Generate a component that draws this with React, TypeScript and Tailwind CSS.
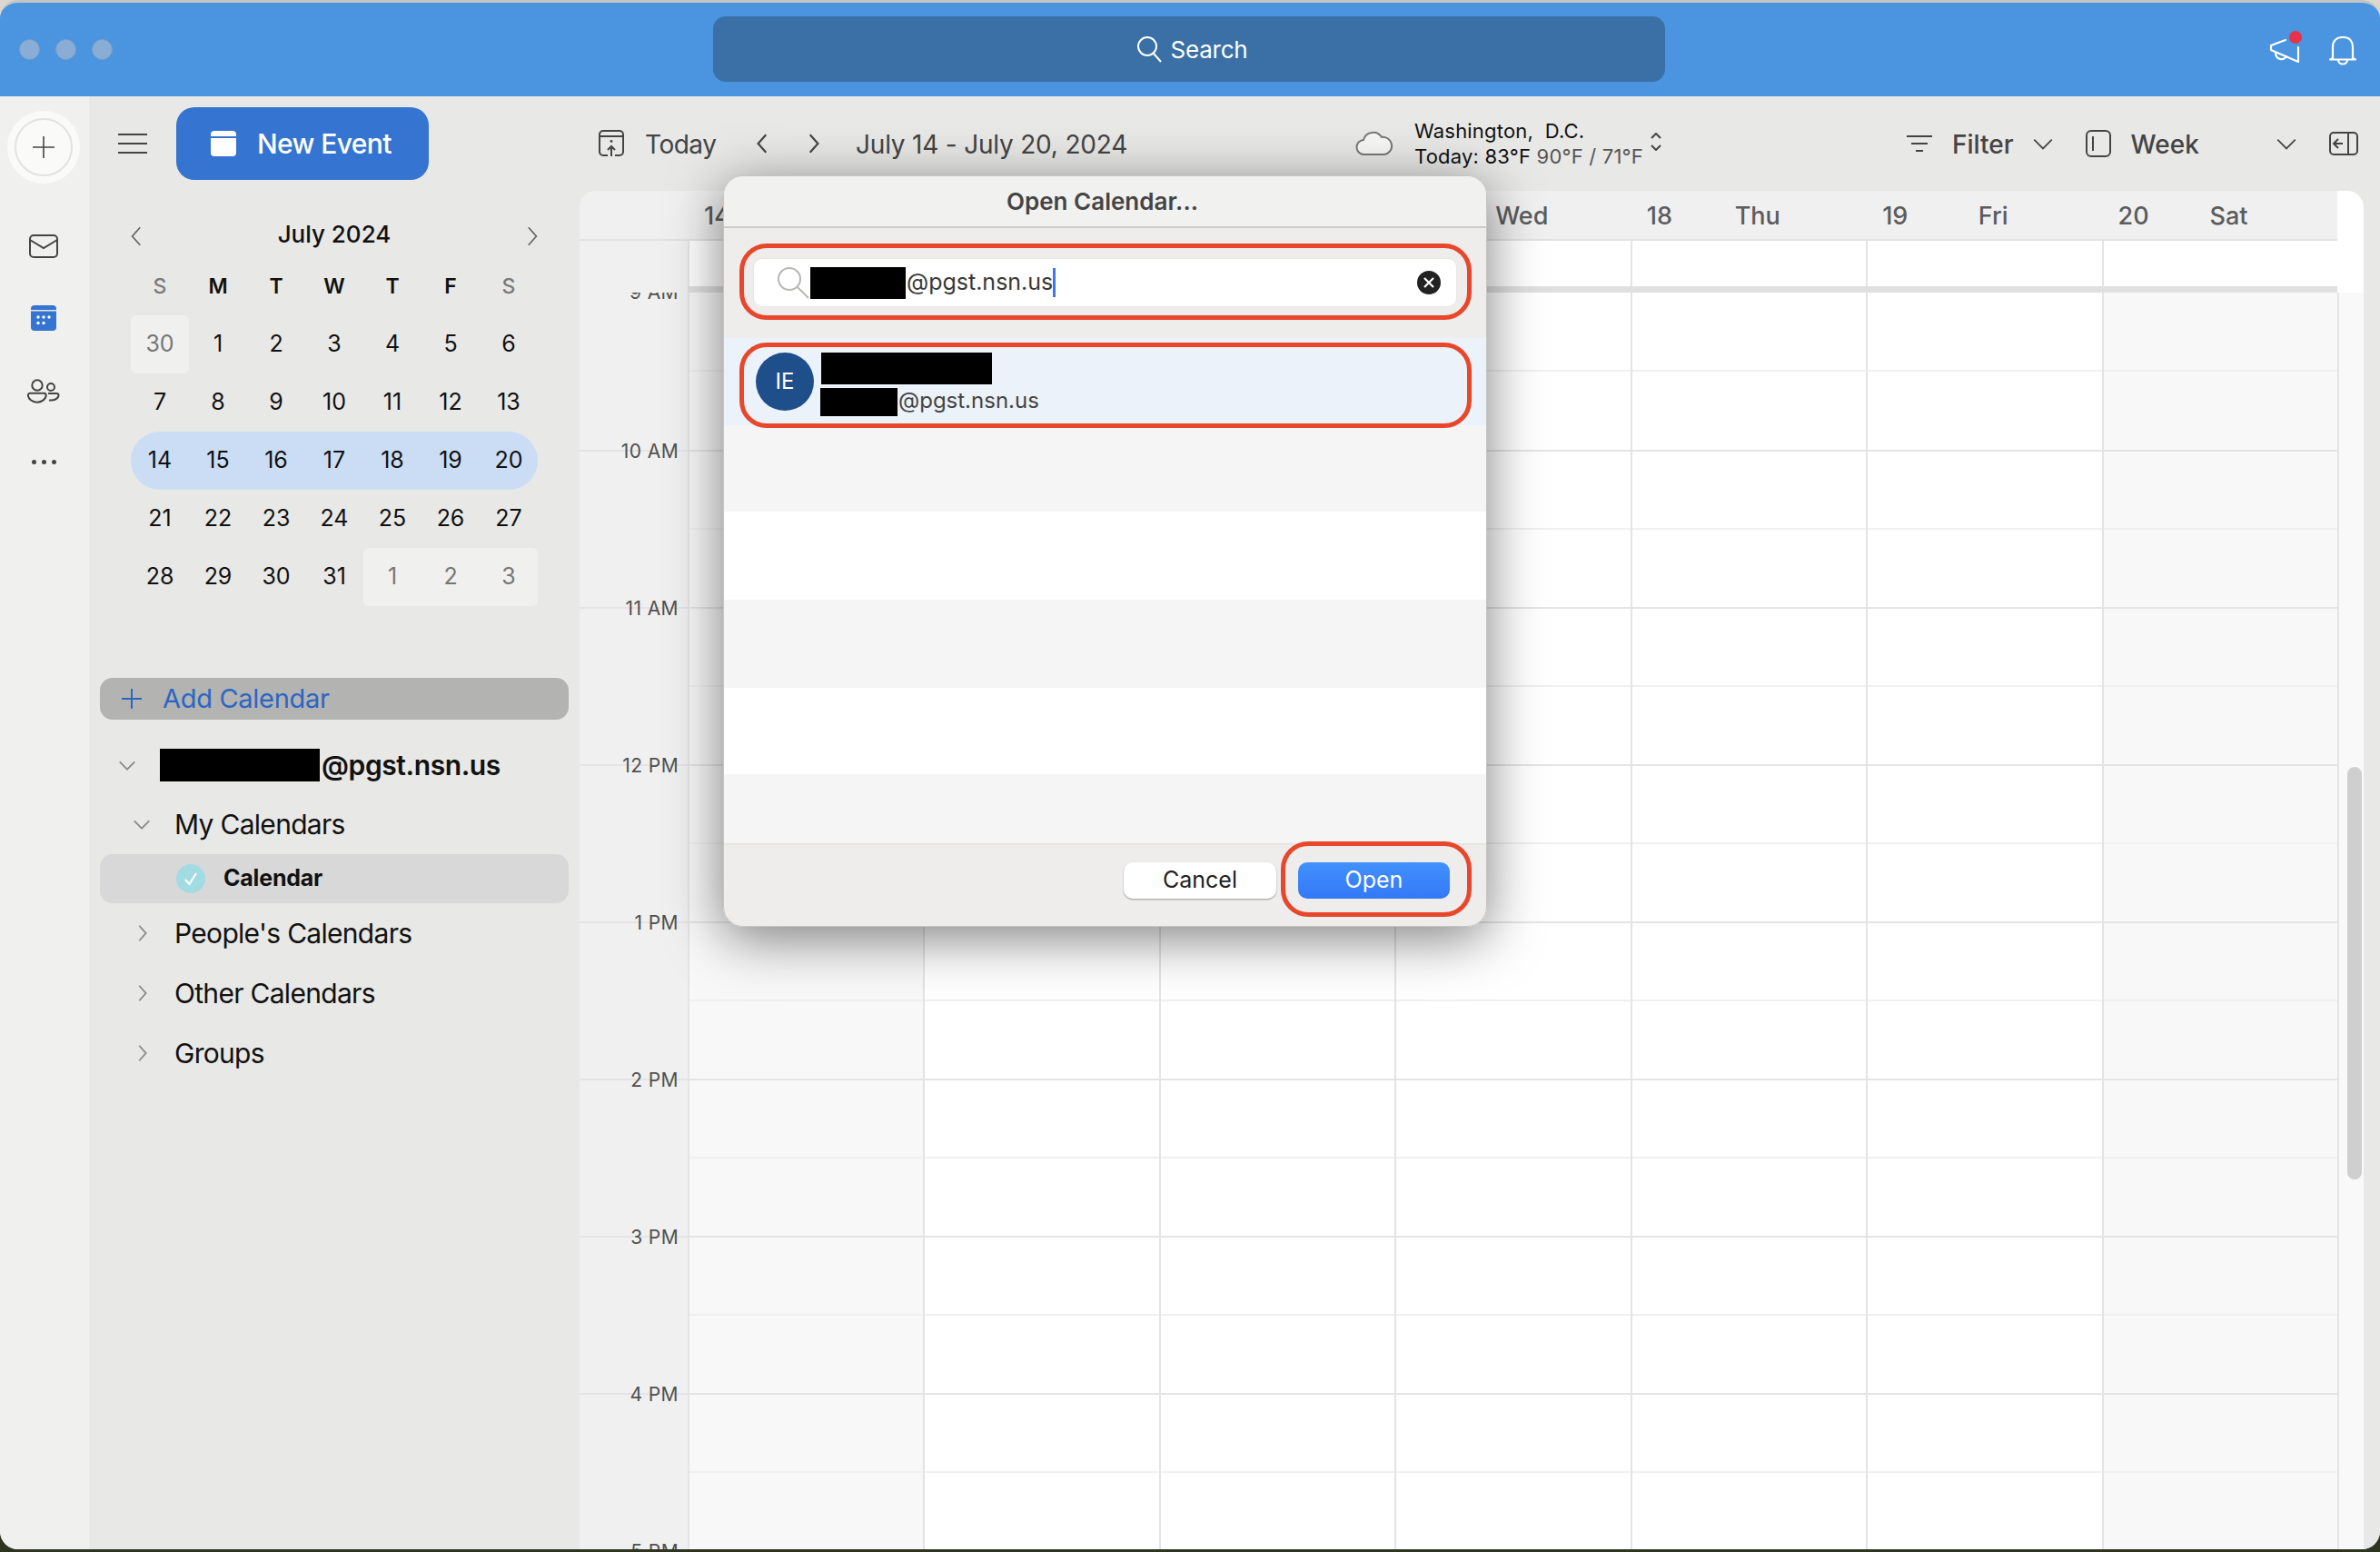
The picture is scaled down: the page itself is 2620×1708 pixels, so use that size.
import React from "react";

const days = [
  { n: 14, d: "Sun" },
  { n: 15, d: "Mon" },
  { n: 16, d: "Tue" },
  { n: 17, d: "Wed" },
  { n: 18, d: "Thu" },
  { n: 19, d: "Fri" },
  { n: 20, d: "Sat" },
];

const hours = ["9 AM", "10 AM", "11 AM", "12 PM", "1 PM", "2 PM", "3 PM", "4 PM", "5 PM"];

const monthRows = [
  [30, 1, 2, 3, 4, 5, 6],
  [7, 8, 9, 10, 11, 12, 13],
  [14, 15, 16, 17, 18, 19, 20],
  [21, 22, 23, 24, 25, 26, 27],
  [28, 29, 30, 31, 1, 2, 3],
];

function Chevron({ dir, size = 22, color = "#555", sw = 2 }: { dir: "left" | "right" | "up" | "down"; size?: number; color?: string; sw?: number }) {
  const d = {
    left: "M15 3 L7 12 L15 21",
    right: "M9 3 L17 12 L9 21",
    down: "M3 8 L12 17 L21 8",
    up: "M3 16 L12 7 L21 16",
  }[dir];
  return (
    <svg width={size} height={size} viewBox="0 0 24 24" fill="none" stroke={color} strokeWidth={sw} className="shrink-0">
      <path d={d} />
    </svg>
  );
}

function Redacted({ className }: { className: string }) {
  return <div className={`bg-black shrink-0 ${className}`} />;
}

function TreeRow({ label, open }: { label: string; open?: boolean }) {
  return (
    <div className="h-[66px] mx-[12px] flex items-center">
      <div className="w-[82px] pl-[35px]">
        <Chevron dir={open ? "down" : "right"} color="#8a8a8e" />
      </div>
      <span className="text-[30px] tracking-[-0.7px] text-[#111]">{label}</span>
    </div>
  );
}

function Rail() {
  return (
    <div className="w-[98px] shrink-0 bg-[#f0f0ee] flex flex-col items-center pr-[2px]">
      <div className="mt-[16px] w-[80px] h-[80px] rounded-full bg-[#fafaf8] flex items-center justify-center">
        <div className="w-[64px] h-[64px] rounded-full border-2 border-[#e2e2e0] flex items-center justify-center">
          <svg width="26" height="26" viewBox="0 0 26 26" stroke="#444" strokeWidth="1.6">
            <path d="M13 1V25M1 13H25" />
          </svg>
        </div>
      </div>
      <svg className="mt-[55px]" width="34" height="28" viewBox="0 0 34 28" fill="none" stroke="#444" strokeWidth="2">
        <rect x="2" y="2" width="30" height="24" rx="4" />
        <path d="M2 7L17 16L32 7" />
      </svg>
      <svg className="mt-[51px]" width="28" height="28" viewBox="0 0 28 28">
        <rect width="28" height="28" rx="4" fill="#3574d0" />
        <rect y="5" width="28" height="1.5" fill="#e8e8e6" />
        <g fill="#fff">
          <circle cx="8" cy="13" r="1.7" />
          <circle cx="14" cy="13" r="1.7" />
          <circle cx="20" cy="13" r="1.7" />
          <circle cx="8" cy="19.5" r="1.7" />
          <circle cx="14" cy="19.5" r="1.7" />
        </g>
      </svg>
      <svg className="mt-[50px]" width="36" height="30" viewBox="0 0 36 30" fill="none" stroke="#444" strokeWidth="2">
        <circle cx="11" cy="10" r="5.7" />
        <circle cx="26" cy="12" r="4" />
        <path d="M3 18.7H18.5a2.3 2.3 0 0 1 2.2 2.2C20.7 25 16 28.7 10.7 28.7S.9 25 .9 20.9A2.3 2.3 0 0 1 3 18.7z" />
        <path d="M23 19H32.5a2 2 0 0 1 2 2C34.5 24.5 30 27 24 26.5" />
      </svg>
      <div className="mt-[62px] flex gap-[6px]">
        <div className="w-[5px] h-[5px] rounded-full bg-[#444]" />
        <div className="w-[5px] h-[5px] rounded-full bg-[#444]" />
        <div className="w-[5px] h-[5px] rounded-full bg-[#444]" />
      </div>
    </div>
  );
}

function MiniMonth() {
  return (
    <div className="ml-[46px] w-[448px]">
      <div className="mt-[37px] h-[44px] -mx-[6px] flex items-center justify-between">
        <div className="mt-[5px]">
          <Chevron dir="left" size={26} color="#666" sw={1.6} />
        </div>
        <span className="text-[26px] font-medium text-[#111]">July 2024</span>
        <div className="mt-[5px]">
          <Chevron dir="right" size={26} color="#666" sw={1.6} />
        </div>
      </div>
      <div className="mt-[5px] h-[63px] grid grid-cols-7 items-center text-center text-[23px] font-semibold text-[#111]">
        {["S", "M", "T", "W", "T", "F", "S"].map((d, i) => (
          <span key={i} className={i === 0 || i === 6 ? "text-[#7a7a7a] font-medium" : ""}>
            {d}
          </span>
        ))}
      </div>
      {monthRows.map((row, r) => (
        <div key={r} className={`h-[64px] grid grid-cols-7 text-[25px] text-[#111] ${r === 2 ? "bg-[#cbddf4] rounded-full" : ""}`}>
          {row.map((n, c) => {
            const prev = r === 0 && c === 0;
            const next = r === 4 && c >= 4;
            return (
              <div
                key={c}
                className={`flex items-center justify-center ${prev ? "bg-[#f0f0ee] text-[#777] rounded-[6px]" : ""} ${next ? "bg-[#f0f0ee] text-[#777]" : ""} ${r === 4 && c === 4 ? "rounded-l-[6px]" : ""} ${r === 4 && c === 6 ? "rounded-r-[6px]" : ""}`}
              >
                {n}
              </div>
            );
          })}
        </div>
      ))}
    </div>
  );
}

function Sidebar() {
  return (
    <div className="w-[540px] shrink-0 bg-[#e8e8e6] flex flex-col">
      <div className="mt-[12px] h-[80px] flex items-center pl-[32px] gap-[32px]">
        <svg width="32" height="24" viewBox="0 0 32 24" stroke="#444" strokeWidth="2">
          <path d="M0 2H32M0 12H32M0 22H32" />
        </svg>
        <div className="w-[278px] h-[80px] bg-[#3574d0] rounded-[20px] flex items-center pl-[38px] gap-[23px]">
          <svg width="28" height="28" viewBox="0 0 28 28">
            <path d="M4 0H24a4 4 0 0 1 4 4V6H0V4a4 4 0 0 1 4-4z" fill="#fff" />
            <path d="M0 8H28V24a4 4 0 0 1-4 4H4a4 4 0 0 1-4-4z" fill="#fff" />
          </svg>
          <span className="text-[30px] font-medium tracking-[-0.6px] text-white">New Event</span>
        </div>
      </div>
      <MiniMonth />
      <div className="mt-[79px] mx-[12px] h-[46px] rounded-[14px] bg-[#b3b3b1] flex items-center pl-[24px] gap-[23px]">
        <svg width="22" height="22" viewBox="0 0 22 22" stroke="#2a66c5" strokeWidth="2">
          <path d="M11 0V22M0 11H22" />
        </svg>
        <span className="text-[29px] tracking-[-0.3px] text-[#2a66c5]">Add Calendar</span>
      </div>
      <div className="mt-[18px] mx-[12px] h-[64px] flex items-center">
        <div className="w-[66px] pl-[19px]">
          <Chevron dir="down" color="#8a8a8e" />
        </div>
        <Redacted className="w-[176px] h-[36px]" />
        <span className="ml-[2px] text-[30px] font-semibold tracking-[-0.4px] text-[#111]">@pgst.nsn.us</span>
      </div>
      <TreeRow label="My Calendars" open />
      <div className="mx-[12px] h-[54px] rounded-[14px] bg-[#d8d8d8] flex items-center pl-[84px]">
        <div className="w-[32px] h-[32px] rounded-full bg-[#a3dbe2] flex items-center justify-center">
          <svg width="18" height="18" viewBox="0 0 18 18" fill="none" stroke="#fff" strokeWidth="2">
            <path d="M3 10L7.5 15L15 3" />
          </svg>
        </div>
        <span className="ml-[20px] text-[25px] font-bold tracking-[-0.2px] text-[#111]">Calendar</span>
      </div>
      <TreeRow label="People's Calendars" />
      <TreeRow label="Other Calendars" />
      <TreeRow label="Groups" />
    </div>
  );
}

function Toolbar() {
  return (
    <div className="h-[104px] flex items-center text-[#444] bg-[#e8e8e6]">
      <svg className="ml-[21px]" width="28" height="30" viewBox="0 0 28 30" fill="none" stroke="#444" strokeWidth="2">
        <path d="M10 28H5a4 4 0 0 1-4-4V5a4 4 0 0 1 4-4h18a4 4 0 0 1 4 4v19a4 4 0 0 1-4 4h-5" />
        <path d="M1 7H27M14 29V18M10 22L14 18L18 22" />
        <circle cx="14" cy="12.5" r="1.4" fill="#444" stroke="none" />
      </svg>
      <span className="ml-[23px] mt-[2px] w-[77px] text-[28px] tracking-[-0.5px] whitespace-nowrap">Today</span>
      <div className="ml-[40px]">
        <Chevron dir="left" size={26} color="#444" />
      </div>
      <div className="ml-[29px]">
        <Chevron dir="right" size={26} color="#444" />
      </div>
      <span className="ml-[34px] mt-[2px] w-[301px] text-[28px] tracking-[-0.2px] whitespace-nowrap">July 14 - July 20, 2024</span>
      <svg className="ml-[249px]" width="42" height="28" viewBox="0 0 42 28" fill="#f7f7f5" stroke="#777" strokeWidth="2">
        <path d="M10 26a8 8 0 0 1-1-16 11 11 0 0 1 20-3 9 9 0 0 1 3 19z" />
      </svg>
      <div className="ml-[23px] w-[259px] flex flex-col leading-[28px] text-[22px] tracking-[0.2px] text-[#111] whitespace-nowrap">
        <span>Washington,&nbsp; D.C.</span>
        <span>
          Today: 83°F <span className="text-[#555]">90°F / 71°F</span>
        </span>
      </div>
      <svg className="mb-[4px]" width="14" height="20" viewBox="0 0 14 20" fill="none" stroke="#444" strokeWidth="2">
        <path d="M2 6L7 1L12 6M2 14L7 19L12 14" />
      </svg>
      <svg className="ml-[269px]" width="28" height="20" viewBox="0 0 28 20" stroke="#444" strokeWidth="2">
        <path d="M0 2H28M5 10H23M10 18H18" />
      </svg>
      <span className="ml-[22px] mt-[2px] text-[28px] font-medium">Filter</span>
      <div className="ml-[19px]">
        <Chevron dir="down" size={26} color="#444" sw={1.6} />
      </div>
      <svg className="ml-[34px]" width="28" height="30" viewBox="0 0 28 30" fill="none" stroke="#444" strokeWidth="2">
        <rect x="1" y="1" width="26" height="28" rx="5" />
        <path d="M8 7V23" />
      </svg>
      <span className="ml-[22px] mt-[2px] text-[28px] font-medium">Week</span>
      <div className="ml-[83px]">
        <Chevron dir="down" size={26} color="#444" sw={1.6} />
      </div>
      <svg className="ml-[34px]" width="32" height="26" viewBox="0 0 32 26" fill="none" stroke="#444" strokeWidth="2">
        <rect x="1" y="1" width="30" height="24" rx="4" />
        <path d="M21 1V25M15 13H6M10 8L5 13L10 18" />
      </svg>
    </div>
  );
}

function CalendarGrid() {
  return (
    <div className="flex-1 flex min-h-0 rounded-tl-[18px] overflow-hidden">
      <div className="w-[1935px] shrink-0 flex flex-col bg-[#f0f0f0] overflow-hidden">
        <div className="h-[55px] flex shrink-0 border-b-2 border-[#e2e2e2]">
          <div className="w-[119px] shrink-0" />
          <div className="flex-1 grid grid-cols-7">
            {days.map((d) => (
              <div key={d.n} className="flex items-center pt-[3px] text-[27px] font-medium text-[#5c5c5c]">
                <span className="w-[60px] pl-[18px]">{d.n}</span>
                <span className="w-[160px] text-center">{d.d}</span>
              </div>
            ))}
          </div>
        </div>
        <div className="h-[50px] flex shrink-0">
          <div className="w-[119px] shrink-0" />
          <div className="flex-1 grid grid-cols-7">
            {days.map((d) => (
              <div key={d.n} className="bg-white border-l-2 border-[#e4e4e4]" />
            ))}
          </div>
        </div>
        <div className="h-[7px] shrink-0 bg-[#e0e0e0] ml-[119px]" />
        <div className="flex-1 overflow-hidden">
          {hours.map((h, i) => (
            <div key={h} className={`h-[173px] flex ${i === 0 ? "" : "border-t-2 border-[#e4e4e4]"}`}>
              <div className="w-[119px] shrink-0 pr-[10px] text-right text-[21px] leading-[24px] text-[#505050] bg-[#f0f0f0] tracking-[0.4px]">
                <span className="block -translate-y-1/2">{h}</span>
              </div>
              <div className="flex-1 grid grid-cols-7">
                {days.map((d, c) => (
                  <div key={d.n} className={`border-l-2 border-[#e4e4e4] ${c === 0 || c === 6 ? "bg-[#f8f8f8]" : "bg-white"}`}>
                    <div className="h-[50%] border-b-2 border-[#f0f0f0]" />
                  </div>
                ))}
              </div>
            </div>
          ))}
        </div>
      </div>
      <div className="w-[29px] shrink-0 flex flex-col rounded-tr-[18px] overflow-hidden bg-white">
        <div className="h-[112px] shrink-0" />
        <div className="flex-1 bg-[#f9f9f9] pl-[9px] pr-[2px] pt-[522px] border-l-2 border-[#e4e4e4]">
          <div className="h-[454px] rounded-full bg-[#cfcfcf]" />
        </div>
      </div>
      <div className="w-[18px] shrink-0 bg-[#e8e8e6]" />
    </div>
  );
}

function OpenCalendarDialog() {
  return (
    <div className="absolute left-[796px] top-[193px] w-[841px] h-[827px] rounded-[22px] overflow-hidden flex flex-col bg-[#eeedeb] border border-[#c4c4c4]">
      <div className="h-[55px] shrink-0 bg-[#f1f1ef] flex items-center justify-center pr-[6px] border-b-2 border-[#cdcdcb] box-content">
        <span className="text-[26px] font-semibold text-[#444]">Open Calendar...</span>
      </div>
      <div className="h-[121px] shrink-0 px-[32px] pt-[33px]">
        <div className="h-[54px] bg-white rounded-[10px] border border-[#e6e6e4] flex items-center pl-[25px] pr-[17px]">
          <svg width="36" height="36" viewBox="0 0 36 36" fill="none" stroke="#b8b6b2" strokeWidth="2" className="shrink-0">
            <circle cx="14" cy="14" r="12" />
            <path d="M23 23L35 35" />
          </svg>
          <Redacted className="ml-[1px] w-[105px] h-[35px]" />
          <span className="text-[25px] text-[#3a3a3a] ml-[1px]">@pgst.nsn.us</span>
          <div className="w-[3px] h-[32px] bg-[#3a78f0]" />
          <div className="ml-auto w-[26px] h-[26px] rounded-full bg-[#222] flex items-center justify-center">
            <svg width="12" height="12" viewBox="0 0 12 12" stroke="#fff" strokeWidth="2.2">
              <path d="M1 1L11 11M11 1L1 11" />
            </svg>
          </div>
        </div>
      </div>
      <div className="h-[96px] shrink-0 bg-[#ebf2fa] flex items-center pl-[35px]">
        <div className="w-[64px] h-[64px] rounded-full bg-[#1f4f8b] flex items-center justify-center text-[24px] text-white">IE</div>
        <div className="ml-[7px] flex flex-col mt-[6px]">
          <Redacted className="ml-[1px] w-[188px] h-[35px]" />
          <div className="mt-[4px] flex items-start">
            <Redacted className="w-[85px] h-[31px]" />
            <span className="ml-[1px] text-[24px] leading-[28px] text-[#444]">@pgst.nsn.us</span>
          </div>
        </div>
      </div>
      <div className="h-[95px] shrink-0 bg-[#f4f5f4]" />
      <div className="h-[97px] shrink-0 bg-white" />
      <div className="h-[97px] shrink-0 bg-[#f4f5f4]" />
      <div className="h-[95px] shrink-0 bg-white" />
      <div className="h-[78px] shrink-0 bg-[#f4f5f4] border-b-2 border-[#e5e5e3]" />
      <div className="flex-1 flex items-start justify-end pt-[19px] pr-[40px] gap-[24px] text-[25px]">
        <button className="w-[168px] h-[40px] rounded-[10px] bg-white text-[#222] shadow-[0_1px_2px_rgba(0,0,0,0.35)]">Cancel</button>
        <button className="w-[167px] h-[40px] rounded-[10px] bg-gradient-to-b from-[#4291ff] to-[#3478f6] text-white">Open</button>
      </div>
      {/* annotation outlines */}
      <div className="absolute left-[17px] top-[74px] w-[806px] h-[84px] rounded-[30px] border-[5px] border-[#e8472b]" />
      <div className="absolute left-[17px] top-[183px] w-[806px] h-[94px] rounded-[30px] border-[5px] border-[#e8472b]" />
      <div className="absolute left-[613px] top-[732px] w-[210px] h-[83px] rounded-[30px] border-[5px] border-[#e8472b]" />
    </div>
  );
}

export default function App() {
  return (
    <div className="relative w-[2620px] h-[1708px] overflow-hidden bg-[linear-gradient(#dcd8d0_50%,#2f3420_50%)] [font-family:Inter,'Noto_Sans',sans-serif]">
      <div className="w-[2620px] h-[1705px] rounded-[20px] overflow-hidden flex flex-col bg-[#e8e8e6] border-t-[3px] border-[#c6c4c0]">
        <div className="h-[103px] shrink-0 bg-[#4a94e0] flex items-center">
          <div className="w-[785px] flex items-center gap-[17px] pl-[21px] pb-[1px]">
            <div className="w-[23px] h-[23px] rounded-full bg-[#8aadd6] border border-[#7c9cc4]" />
            <div className="w-[23px] h-[23px] rounded-full bg-[#8aadd6] border border-[#7c9cc4]" />
            <div className="w-[23px] h-[23px] rounded-full bg-[#8aadd6] border border-[#7c9cc4]" />
          </div>
          <div className="w-[1048px] h-[72px] mb-[1px] rounded-[14px] bg-[#3a70a6] flex items-center justify-center pl-[6px] gap-[8px] text-white text-[26px] tracking-[-0.2px]">
            <svg width="30" height="30" viewBox="0 0 30 30" fill="none" stroke="#fff" strokeWidth="2">
              <circle cx="13" cy="12" r="10" />
              <path d="M20 20L28 29" />
            </svg>
            Search
          </div>
          <div className="ml-auto flex items-center gap-[32px] pr-[26px] pt-[2px]">
            <div className="relative">
              <svg width="34" height="28" viewBox="0 0 34 28" fill="none" stroke="#fff" strokeWidth="2.2" strokeLinecap="round" strokeLinejoin="round">
                <path d="M18 2L2 8V13L32 26V10" />
                <path d="M7 16C7 24 16 25 19 20" />
              </svg>
              <div className="absolute -top-[8px] right-[-2px] w-[14px] h-[14px] rounded-full bg-[#e8324a]" />
            </div>
            <svg width="30" height="32" viewBox="0 0 30 32" fill="none" stroke="#fff" strokeWidth="2.2" strokeLinejoin="round">
              <path d="M4 24V12C4 5 8 1 15 1S26 5 26 12V24L29 25.5H1L4 24z" />
              <path d="M10 26C10 32 20 32 20 26" />
            </svg>
          </div>
        </div>
        <div className="flex-1 flex min-h-0">
          <Rail />
          <Sidebar />
          <div className="flex-1 flex flex-col min-w-0">
            <Toolbar />
            <CalendarGrid />
          </div>
        </div>
      </div>
      <div className="absolute left-[796px] top-[193px] w-[841px] h-[827px] rounded-[22px] shadow-[0_12px_60px_rgba(0,0,0,0.5)]" />
      <OpenCalendarDialog />
    </div>
  );
}
